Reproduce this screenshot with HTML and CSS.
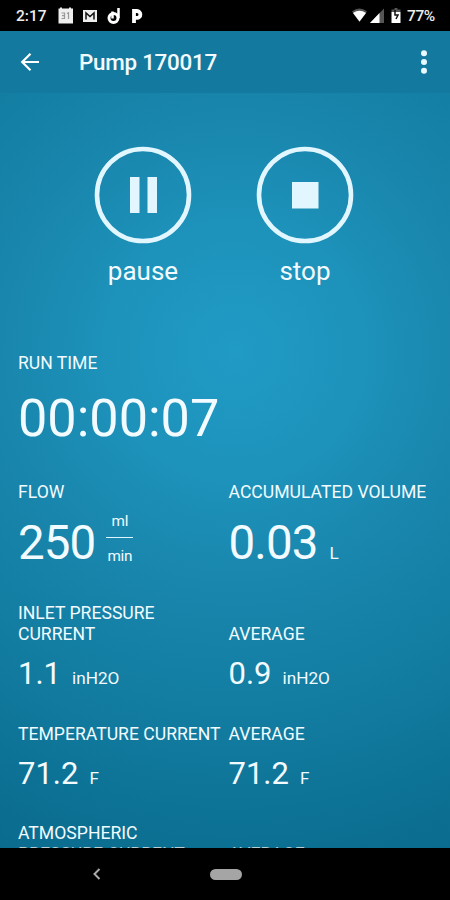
FILE: index.html
```html
<!DOCTYPE html>
<html lang="en">
<head>
<meta charset="utf-8">
<title>Pump 170017</title>
<link rel="stylesheet" href="styles.css">
</head>
<body>
<div class="screen">
  <div class="status">
    <span class="clock">2:17</span>
    <svg class="notes" width="90" height="18" viewBox="0 0 90 18">
      <path fill="#eee" d="M1.500 1.500H3V.5h2v1h7v-1h2v1h2v15H1.500z"/>
      <path fill="none" stroke="#999" stroke-width="1.200" d="M4.500 6h3v5.500h-3M5 8.700h2.500M10 6.500l1.500-.7V12"/>
      <path fill="#eee" d="M26 3h14v12H26z"/>
      <path fill="none" stroke="#111" stroke-width="1.500" d="M29 12.500V6l4 3.500L37 6v6.500"/>
      <circle cx="56.500" cy="11" r="4.500" fill="none" stroke="#fff" stroke-width="3"/>
      <path fill="none" stroke="#fff" stroke-width="2.500" d="M55.500 11.500V4.500M61.500 1v10"/>
      <path fill="none" stroke="#fff" stroke-width="3.800" d="M77 16V4h3a3.400 3.400 0 0 1 0 6.800h-3"/>
    </svg>
    <svg class="signals" width="52" height="18" viewBox="0 0 52 18">
      <path fill="#555" d="M1 4.500Q8.500-1.500 16 4.500L8.500 15z"/>
      <path fill="#fff" d="M2 6Q8.500 1.500 15 6L8.500 14.500z"/>
      <path fill="#555" d="M19 16 33 1.500V16z"/>
      <path fill="#fff" d="M19 16l9.500-10V16z"/>
      <path fill="#555" d="M40.500 2.500h3V1h3v1.500h3V5h-9z"/>
      <path fill="#fff" d="M40.500 5h9v11h-9z"/>
      <path fill="none" stroke="#111" stroke-width="1.500" d="M44 3v5h3l-2 4"/>
    </svg>
    <span class="battery">77%</span>
  </div>
  <div class="app">
    <header class="bar">
      <svg class="back" width="20" height="20" viewBox="0 0 20 20"><path fill="none" stroke="#fff" stroke-width="2.200" d="M19 10H2.500M10.500 1.700 2.200 10l8.300 8.300"/></svg>
      <h1>Pump 170017</h1>
      <svg class="more" width="8" height="26" viewBox="0 0 8 26"><g fill="#e8faff"><circle cx="4" cy="4.200" r="3"/><circle cx="4" cy="13" r="3"/><circle cx="4" cy="21.800" r="3"/></g></svg>
    </header>
    <div class="controls">
      <div class="control">
        <svg width="98" height="98" viewBox="0 0 98 98"><circle cx="49" cy="49" r="46" fill="none" stroke="#e2f6ff" stroke-width="4.600"/><path fill="#e2f6ff" d="M36 31h9.500v36H36zM53.500 31H63v36h-9.500z"/></svg>
        <span>pause</span>
      </div>
      <div class="control">
        <svg width="98" height="98" viewBox="0 0 98 98"><circle cx="49" cy="49" r="46" fill="none" stroke="#e2f6ff" stroke-width="4.600"/><path fill="#e2f6ff" d="M36 36h26.500v26.500H36z"/></svg>
        <span>stop</span>
      </div>
    </div>
    <div class="readings">
      <section class="runtime">
        <div class="label">RUN TIME</div>
        <div class="value time">00:00:07</div>
      </section>
      <div class="row flow">
        <section>
          <div class="label">FLOW</div>
          <div class="value big">250<span class="fraction"><span>ml</span><span>min</span></span></div>
        </section>
        <section>
          <div class="label">ACCUMULATED VOLUME</div>
          <div class="value big">0.03<span class="unit litre">L</span></div>
        </section>
      </div>
      <div class="row inlet">
        <section>
          <div class="label">INLET PRESSURE<br>CURRENT</div>
          <div class="value">1.1<span class="unit">inH2O</span></div>
        </section>
        <section>
          <div class="label">AVERAGE</div>
          <div class="value">0.9<span class="unit">inH2O</span></div>
        </section>
      </div>
      <div class="row temp">
        <section>
          <div class="label">TEMPERATURE CURRENT</div>
          <div class="value">71.2<span class="unit">F</span></div>
        </section>
        <section>
          <div class="label">AVERAGE</div>
          <div class="value">71.2<span class="unit">F</span></div>
        </section>
      </div>
      <div class="row atmos">
        <section><div class="label">ATMOSPHERIC<br><span class="dim">PRESSURE CURRENT</span></div></section>
        <section><div class="label dim">AVERAGE</div></section>
      </div>
    </div>
  </div>
  <nav class="nav">
    <svg class="nav-back" width="10" height="14" viewBox="0 0 10 14"><path fill="none" stroke="#aaa" stroke-width="2" d="M7.500 2 2.500 7l5 5"/></svg>
    <span class="pill"></span>
  </nav>
</div>
</body>
</html>
```

FILE: styles.css
```css
* { box-sizing: border-box; }
body { margin: 0; background: #000; }
.screen {
  width: 450px;
  height: 900px;
  display: flex;
  flex-direction: column;
  overflow: hidden;
  font-family: Roboto, "Liberation Sans", sans-serif;
  color: #f2fbff;
  white-space: nowrap;
}
.status {
  height: 30.5px;
  flex: none;
  display: flex;
  align-items: center;
  padding: 2px 14px 0 16px;
  background: #000;
  color: #eee;
  font-size: 15.5px;
  font-weight: 500;
}
.clock { width: 41px; }
.signals { margin-left: auto; margin-right: 4px; }
.battery { width: 29px; font-size: 15.5px; letter-spacing: -0.4px; }
.app {
  height: 817.5px;
  flex: none;
  overflow: hidden;
  background: radial-gradient(circle at 235px 320px, #209bc6 0, #1d92ba 130px, #1986ad 235px, #127ca0 370px, #0c7194 480px, #0a698b 580px);
}
.bar {
  height: 62px;
  display: flex;
  align-items: center;
  padding: 0 22px 0 20px;
  background: #14799e;
}
.bar h1 {
  margin: 0 auto 0 39px;
  font-size: 22.4px;
  font-weight: 500;
  line-height: 26px;
  letter-spacing: -0.25px;
}
.controls {
  display: flex;
  justify-content: center;
  gap: 64px;
  padding: 53px 2px 0 0;
  height: 260.5px;
}
.control {
  width: 98px;
  display: flex;
  flex-direction: column;
  align-items: center;
  font-size: 26px;
  line-height: 30px;
}
.control span { margin-top: 12px; }
.readings { padding-left: 18px; }
.runtime { height: 129px; }
.label { font-size: 17.6px; line-height: 21px; }
.value {
  display: flex;
  align-items: baseline;
  font-size: 31px;
  line-height: 36px;
  margin-top: 11px;
}
.value.time { font-size: 52.2px; line-height: 60px; margin-top: 15px; }
.value.big {
  font-size: 47.5px;
  line-height: 54px;
  margin-top: 13px;
  letter-spacing: -0.9px;
}
.unit { font-size: 17.2px; margin-left: 11px; letter-spacing: 0; }
.litre { margin-left: 12px; }
.fraction {
  align-self: center;
  display: flex;
  flex-direction: column;
  width: 27px;
  margin: -9px 0 0 11px;
  text-align: center;
  font-size: 15.3px;
  line-height: 18px;
  letter-spacing: -0.2px;
}
.fraction span:first-child { padding-bottom: 7px; border-bottom: 1.5px solid #e2f6ff; }
.fraction span:last-child { padding-top: 9px; }
.row { display: grid; grid-template-columns: 210.5px 1fr; }
.flow { height: 121px; }
.inlet { height: 120.5px; align-items: end; align-content: start; }
.inlet .value { margin-top: 11px; }
.temp { height: 99.5px; }
.atmos { align-items: end; }
.dim { color: #b9cdd3; }
.nav {
  height: 52px;
  flex: none;
  display: flex;
  align-items: center;
  background: #000;
}
.nav-back { margin-left: 92px; }
.pill {
  width: 32px;
  height: 11px;
  margin-left: 108px;
  border-radius: 6px;
  background: #a5a5a5;
}
```
